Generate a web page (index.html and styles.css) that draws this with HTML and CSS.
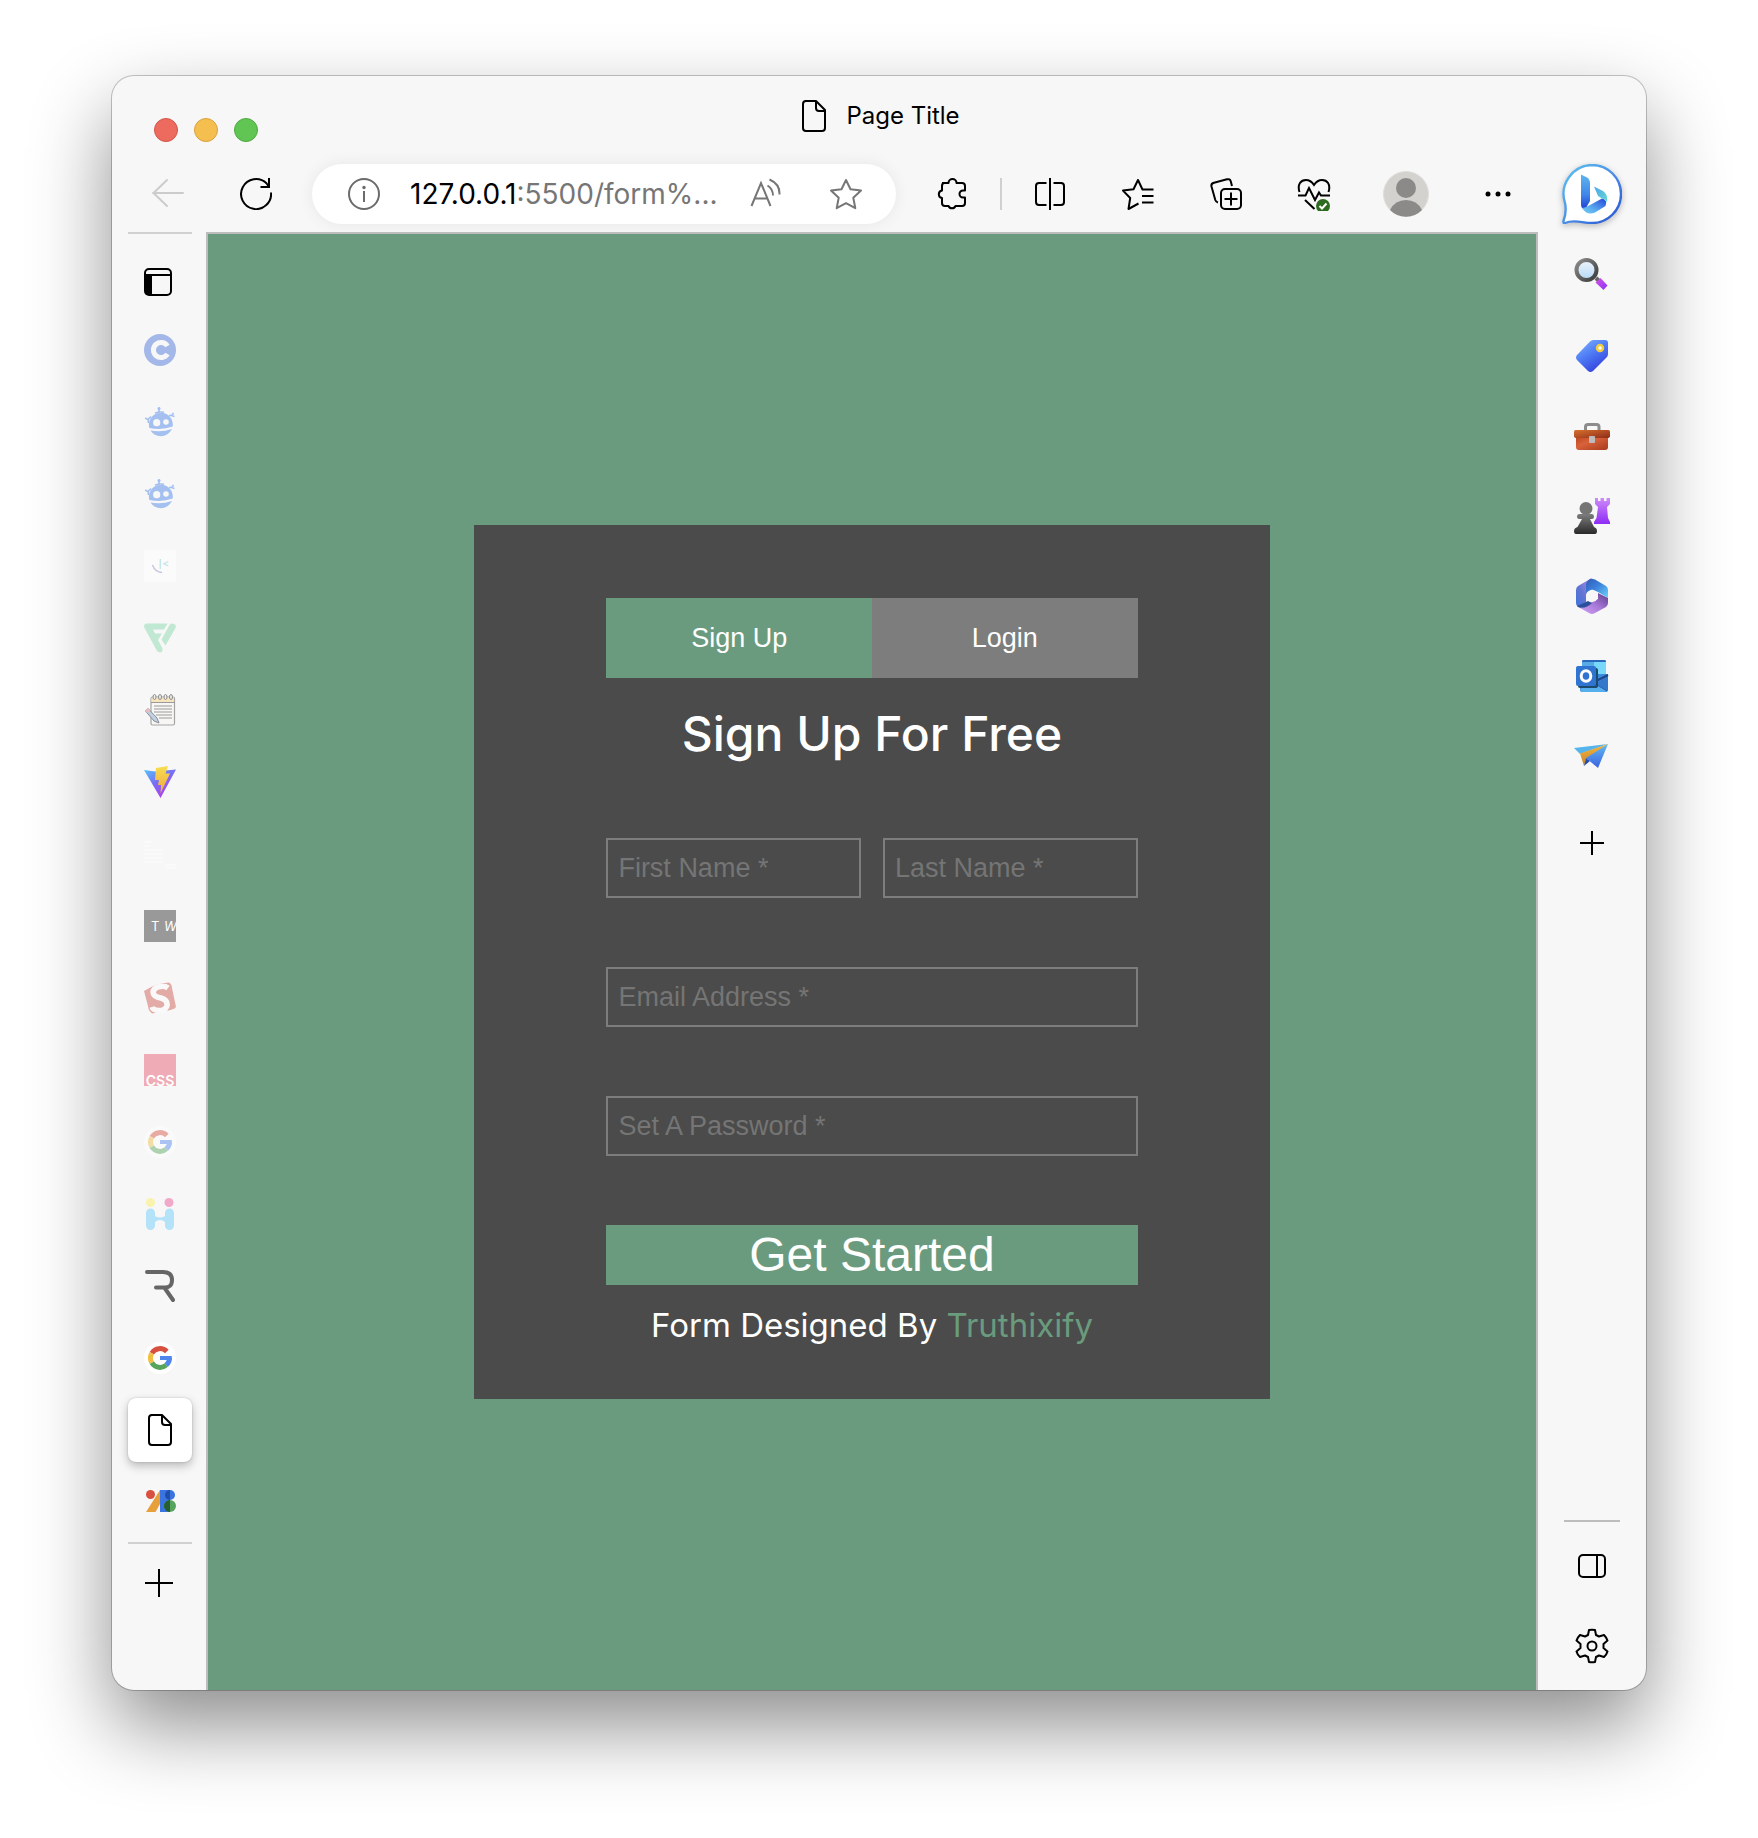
FILE: index.html
```html
<!DOCTYPE html>
<html lang="en">
<head>
<meta charset="utf-8">
<title>Page Title</title>
<link rel="stylesheet" href="styles.css">
</head>
<body>
<svg class="defs" aria-hidden="true">
  <defs>
    <linearGradient id="bingRing" x1="0" y1="0" x2="1" y2="1"><stop offset="0" stop-color="#5fc4ee"/><stop offset=".5" stop-color="#4a8fe8"/><stop offset="1" stop-color="#2450cf"/></linearGradient>
    <linearGradient id="bingStem" x1="0" y1="0" x2="0" y2="1"><stop offset="0" stop-color="#5fb4ee"/><stop offset=".6" stop-color="#3f86ea"/><stop offset="1" stop-color="#2142d4"/></linearGradient>
    <linearGradient id="bingFoot" x1="0" y1="1" x2="1" y2="0"><stop offset="0" stop-color="#6fd0f4"/><stop offset=".4" stop-color="#5aa8ee"/><stop offset="1" stop-color="#2445d8"/></linearGradient>
    <linearGradient id="bingHead" x1="0" y1="0" x2="1" y2="1"><stop offset="0" stop-color="#4ea3ec"/><stop offset="1" stop-color="#64dcd0"/></linearGradient>
    <linearGradient id="vite" x1="0" y1="0" x2=".7" y2="1"><stop offset="0" stop-color="#52c4fb"/><stop offset=".5" stop-color="#7a6cf4"/><stop offset="1" stop-color="#b43af0"/></linearGradient>
    <linearGradient id="bolt" x1="0" y1="0" x2="0" y2="1"><stop offset="0" stop-color="#f8de52"/><stop offset="1" stop-color="#f0a63c"/></linearGradient>
    <linearGradient id="lens" x1="0" y1="0" x2="0" y2="1"><stop offset="0" stop-color="#eef5fc"/><stop offset="1" stop-color="#b4d8f6"/></linearGradient>
    <linearGradient id="rim" x1="0" y1="0" x2="1" y2="1"><stop offset="0" stop-color="#8b8b8b"/><stop offset="1" stop-color="#3c3c3c"/></linearGradient>
    <linearGradient id="grip" x1="0" y1="0" x2="1" y2="1"><stop offset="0" stop-color="#d852e4"/><stop offset="1" stop-color="#8a34f4"/></linearGradient>
    <linearGradient id="tag" x1="0" y1="0" x2=".6" y2="1"><stop offset="0" stop-color="#85b8fa"/><stop offset=".5" stop-color="#4e7df6"/><stop offset="1" stop-color="#3542dc"/></linearGradient>
    <linearGradient id="lid" x1="0" y1="0" x2="1" y2="1"><stop offset="0" stop-color="#d8702e"/><stop offset="1" stop-color="#8e2c18"/></linearGradient>
    <linearGradient id="chest" x1="0" y1="0" x2="1" y2="1"><stop offset="0" stop-color="#b8441e"/><stop offset=".4" stop-color="#d8623a"/><stop offset="1" stop-color="#a83a1c"/></linearGradient>
    <linearGradient id="pawn" x1="0" y1="0" x2="0" y2="1"><stop offset="0" stop-color="#7d7d7d"/><stop offset="1" stop-color="#2a2a2a"/></linearGradient>
    <linearGradient id="rook" x1="0" y1="0" x2="0" y2="1"><stop offset="0" stop-color="#cf8bfa"/><stop offset="1" stop-color="#8e2cf4"/></linearGradient>
    <linearGradient id="mLeft" x1="1" y1="0" x2="0" y2="1"><stop offset="0" stop-color="#b48ae4"/><stop offset=".55" stop-color="#6274d4"/><stop offset="1" stop-color="#3f74d8"/></linearGradient>
    <linearGradient id="mTop" x1="0" y1="0" x2="1" y2="1"><stop offset="0" stop-color="#2f5cb4"/><stop offset=".45" stop-color="#3c80dc"/><stop offset="1" stop-color="#6cd4f8"/></linearGradient>
    <linearGradient id="mLow" x1="0" y1="1" x2="1" y2="0"><stop offset="0" stop-color="#d4a4f6"/><stop offset=".5" stop-color="#a878d8"/><stop offset="1" stop-color="#5c3c8c"/></linearGradient>
    <linearGradient id="wing" x1="0" y1="0" x2="0" y2="1"><stop offset="0" stop-color="#64baf2"/><stop offset="1" stop-color="#3a62e0"/></linearGradient>
    <linearGradient id="fold" x1="0" y1="0" x2="0" y2="1"><stop offset="0" stop-color="#f4b83c"/><stop offset="1" stop-color="#c8802c"/></linearGradient>

    <symbol id="i-file" viewBox="0 0 32 32"><path d="M7 1H18L27 10V28Q27 31 24 31H8Q5 31 5 28V4Q5 1 8 1ZM18 1V8Q18 11 21 11H27" fill="none" stroke="#000" stroke-width="2" stroke-linejoin="round"/></symbol>
    <symbol id="i-robot" viewBox="0 0 32 32">
      <path d="M5.300 22A12 12 0 1 1 28.700 20.500Q18 24.500 5.300 22Z"/>
      <path d="M6.500 24.500Q18 26.500 28 23Q24 30.200 17 30.200T6.500 24.500Z"/>
      <circle cx="12.700" cy="16.700" r="3.600" fill="#f7f7f7"/><circle cx="22" cy="16" r="2.800" fill="#f7f7f7"/>
      <path d="M11 7.300Q15 5.300 20 6.300M15 6V1.500M4.500 17 4 13.500 1.200 12M4 13.500 7 10.500M25 9.500 27.500 9.500 30.500 10.500M27.500 10 29.500 7" fill="none" stroke="#a4c0f0" stroke-width="1.600"/><circle cx="15" cy="2.500" r="1.500"/>
    </symbol>
    <symbol id="i-google" viewBox="0 0 32 32">
      <circle cx="16" cy="16" r="16" fill="#fff"/>
      <g fill="none" stroke-width="5">
        <path d="M22.800 9.500A9.500 9.500 0 0 0 7.800 11.200" stroke="#d8503f"/>
        <path d="M7.800 11.200A9.500 9.500 0 0 0 7.800 20.800" stroke="#f2bf42"/>
        <path d="M7.800 20.800A9.500 9.500 0 0 0 22.300 23" stroke="#57a55c"/>
        <path d="M22.300 23A9.500 9.500 0 0 0 25.500 16" stroke="#5086ec"/>
        <path d="M16 16H27.800" stroke="#5086ec" stroke-width="4"/>
      </g>
    </symbol>
  </defs>
</svg>

<div class="window">
  <header class="titlebar">
    <div class="lights">
      <button class="light light-close" aria-label="Close"></button>
      <button class="light light-min" aria-label="Minimize"></button>
      <button class="light light-max" aria-label="Zoom"></button>
    </div>
    <div class="title"><svg class="i32"><use href="#i-file"/></svg><span>Page Title</span></div>
  </header>

  <nav class="toolbar" aria-label="Browser toolbar">
    <button class="tool" aria-label="Back"><svg class="i32" viewBox="0 0 32 32"><path d="M31 15H1M15 2 1.500 15 15 28" fill="none" stroke="#ccc" stroke-width="2" stroke-linecap="round" stroke-linejoin="round"/></svg></button>
    <button class="tool" aria-label="Reload"><svg class="i32" viewBox="0 0 32 32"><path d="M31 14.500A15 15 0 1 1 26.500 5.300L29 9M29 0V9H20.500" fill="none" stroke="#000" stroke-width="2"/></svg></button>
    <div class="address">
      <button class="tool" aria-label="Site information"><svg class="i32" viewBox="0 0 32 32"><circle cx="16" cy="16" r="15" fill="none" stroke="#6b6b6b" stroke-width="2"/><path d="M16 13V24" stroke="#6b6b6b" stroke-width="2"/><circle cx="16" cy="9.500" r="1.700" fill="#6b6b6b"/></svg></button>
      <button class="url"><span class="host">127.0.0.1</span>:5500/form%...</button>
      <button class="tool tool-small" aria-label="Read aloud"><svg class="i32" viewBox="0 0 32 32"><path d="M1.500 28 11 5 20.500 28M4.500 20.500H17.500M17.500 7.500Q23 11 23 17.500M19.500 1.500Q30 6 29.500 16.500" fill="none" stroke="#767676" stroke-width="2"/></svg></button>
      <button class="tool tool-small" aria-label="Add to favorites"><svg class="i32" viewBox="0 0 32 32"><path d="M16 2 20.500 11.200 31 12.600 23.300 19.800 25.300 30.200 16 25.200 6.700 30.200 8.700 19.800 1 12.600 11.500 11.200Z" fill="none" stroke="#767676" stroke-width="2" stroke-linejoin="round"/></svg></button>
    </div>
    <button class="tool" aria-label="Extensions"><svg class="i32" viewBox="0 0 32 32"><path d="M6 5H12.500A4 4 0 0 1 20.500 5H26Q29 5 29 8V12.500H27A3.500 3.500 0 0 0 27 19.500H29V25Q29 28 26 28H19.500A3.800 3.800 0 0 1 12.500 28H9Q6 28 6 25V20A3.800 3.800 0 0 1 6 12.500V8Q6 5 8.500 5" fill="none" stroke="#000" stroke-width="2" stroke-linejoin="round"/></svg></button>
    <span class="bar"></span>
    <button class="tool" aria-label="Split screen"><svg class="i32" viewBox="0 0 32 32"><path d="M12.500 5H5Q2 5 2 8V24Q2 27 5 27H12.500M19.500 5H27Q30 5 30 8V24Q30 27 27 27H19.500M16 0V32" fill="none" stroke="#000" stroke-width="2"/></svg></button>
    <button class="tool" aria-label="Favorites"><svg class="i32" viewBox="0 0 32 32"><path d="M31.500 11.500H20.500L16 2 11.500 11.200 1 12.600 8.200 20 6.500 31 16.500 25.500M20 18H31.500M20 24.500H31.500" fill="none" stroke="#000" stroke-width="2" stroke-linejoin="round"/></svg></button>
    <button class="tool" aria-label="Collections"><svg class="i32" viewBox="0 0 32 32"><g fill="none" stroke="#000" stroke-width="2"><path d="M22 8 20.800 3.500Q20 .5 17 1.300L4 4.800Q.8 5.600 1.500 8.500L5.300 22Q6 24 8 24.500"/><rect x="11" y="11" width="20" height="20" rx="4"/><path d="M21 14.500V27.500M14.500 21H27.500"/></g></svg></button>
    <button class="tool" aria-label="Browser essentials"><svg class="i34" viewBox="0 0 34 34"><path d="M2.500 15C0 7 4 3 9 3 13 3 15 5 17 8 19 5 21 3 25 3 30 3 34 7 31.500 15M1 18.500H8.500L12 11 18 23 22 15.500 24 18.500H33M8 23 17.500 32" fill="none" stroke="#000" stroke-width="2"/><circle cx="26" cy="29" r="7" fill="#2c6b20"/><path d="M22.500 29 25 31.500 29.500 26.500" fill="none" stroke="#fff" stroke-width="2"/></svg></button>
    <button class="tool tool-wide" aria-label="Profile"><svg class="i46" viewBox="0 0 46 46"><circle cx="23" cy="23" r="22.500" fill="#d3d2ce" stroke="#dfdedb"/><circle cx="23" cy="17" r="10" fill="#8b8a88"/><path d="M7 39Q12 29 23 29T39 39A22.500 22.500 0 0 1 7 39Z" fill="#8b8a88"/></svg></button>
    <button class="tool" aria-label="Settings and more"><svg class="i32" viewBox="0 0 32 32"><circle cx="6" cy="16" r="2.500"/><circle cx="16" cy="16" r="2.500"/><circle cx="26" cy="16" r="2.500"/></svg></button>
    <button class="tool tool-bing" aria-label="Bing Chat"><svg class="i60" viewBox="0 0 60 60"><path d="M30 1A29 29 0 1 1 30 59C20 59 12 55 3 59Q1 59.500 1.500 57C4 50 4.500 46 3 39A29 29 0 0 1 30 1Z" fill="#fff" stroke="url(#bingRing)" stroke-width="2.400"/><path d="M19 10.500 25 13.500Q28 15.500 28 19V37L24 44Q19 46 19 40Z" fill="url(#bingStem)"/><path d="M20 44Q24 44 28 41L40 34.500Q46 36 43.500 42L33 48.500Q25 52 20 44Z" fill="url(#bingFoot)"/><path d="M32 22.500 41 27Q46 30 45 39 44 35 40 34.500L36 32Z" fill="url(#bingHead)"/></svg></button>
  </nav>

  <div class="workspace">
    <aside class="rail rail-tabs" aria-label="Vertical tabs">
      <hr class="rule">
      <button class="tabmenu" aria-label="Tab actions"><svg class="i28" viewBox="0 0 28 28"><rect x="1" y="1" width="26" height="26" rx="4" fill="none" stroke="#000" stroke-width="2"/><path d="M1 7H27" stroke="#000" stroke-width="2"/><path d="M1 7H8V27H4Q1 27 1 24Z"/></svg></button>
      <button class="tab" aria-label="Coursera tab"><svg class="i32" viewBox="0 0 32 32"><circle cx="16" cy="16" r="16" fill="#a3b8e8"/><path d="M23.500 12A7.600 7.600 0 1 0 23.500 20" fill="none" stroke="#f7f7f7" stroke-width="5"/></svg></button>
      <button class="tab" aria-label="Robot tab 1"><svg class="i32 robot"><use href="#i-robot"/></svg></button>
      <button class="tab" aria-label="Robot tab 2"><svg class="i32 robot"><use href="#i-robot"/></svg></button>
      <button class="tab" aria-label="Blank tab"><svg class="i32" viewBox="0 0 32 32"><path d="M0 0H32V32H0Z" fill="#fbfbfb"/><g fill="none" stroke-width="1.400"><path d="M8.500 15Q11 22 18 22.500" stroke="#c4c4e2"/><path d="M16.300 9V19M24.300 11.500 20 13.700 24.300 16" stroke="#c4e6e6"/></g></svg></button>
      <button class="tab" aria-label="Frontend tab"><svg class="i32" viewBox="0 0 32 32"><path d="M3 1.500H23.500L20 7.500H9L11 11.500H18L14 18 18.500 26.500Q19 30 16 30.500 13.500 30 12.500 28L.5 6Q-1 2 3 1.500ZM28 1.500Q33 2 31.500 6L21.500 23.500 17.500 17.500 25.500 3Q26.500 1.500 28 1.500Z" fill="#c0e8d2"/></svg></button>
      <button class="tab" aria-label="Notes tab"><svg class="i32" viewBox="0 0 32 32"><rect x="7" y="3" width="23.500" height="28" rx="1.500" fill="#f7f6f4" stroke="#a5a5a5" stroke-width="1.200"/><path d="M7.500 3.500H30V8H7.500Z" fill="#f6e4bd"/><path d="M7 8.500H30.500M10 12H28M10 15H28M10 18H28M12 21H28M15 24H28" stroke="#9a9a9a" stroke-width="1.200"/><g fill="#eee" stroke="#8c8c8c"><ellipse cx="10.500" cy="3" rx="1.500" ry="2.500"/><ellipse cx="16" cy="3" rx="1.500" ry="2.500"/><ellipse cx="21.500" cy="3" rx="1.500" ry="2.500"/><ellipse cx="27" cy="3" rx="1.500" ry="2.500"/></g><path d="M1.500 17 4 14.500 13 24 15 29 10 27Z" fill="#bfd0e2" stroke="#8d8d95"/><path d="M1.500 17 4 14.500 6 16.500 3.500 19Z" fill="#eebcc0"/></svg></button>
      <button class="tab" aria-label="Vite tab"><svg class="i32" viewBox="0 0 32 32"><path d="M0 4 11 5.500 21 4.500 32 3.500 16.500 32Z" fill="url(#vite)"/><path d="M12 2 24 0 21.500 7.500H26L16.500 27.500 17 19H14L15 14H11Z" fill="url(#bolt)"/></svg></button>
      <button class="tab" aria-label="Page tab"><svg class="i32" viewBox="0 0 32 32"><path d="M0 4H8M0 8H6M0 12H18M0 16H19M0 20H19M0 24H18M20 27H32M22 30H32" stroke="#fafafa" stroke-width="2"/></svg></button>
      <button class="tab" aria-label="TW tab"><svg class="i32 glyph" viewBox="0 0 32 32"><path d="M0 0H32V32H0Z" fill="#999"/><text x="7" y="21" font-size="13">T</text><text x="20" y="21" font-size="13" font-style="italic">W</text></svg></button>
      <button class="tab" aria-label="Stack tab"><svg class="i32" viewBox="0 0 32 32"><path d="M0 9Q12 1 25 .5 28 2 28 6L32 25Q30 28 20 29L8 31.500Q4 28 4 24Z" fill="#e3aba6"/><path d="M24 6Q20 3 14 5 8 7 9.500 12 11 15 17 16 24 18 23 24 21 29 14 28.500 9 28 8 25" fill="none" stroke="#f9f9f9" stroke-width="5.500"/></svg></button>
      <button class="tab" aria-label="CSS tab"><svg class="i32 glyph" viewBox="0 0 32 32"><path d="M0 0H32V32H0Z" fill="#f0acb6"/><text x="16" y="32" font-size="14" font-weight="600" text-anchor="middle">CSS</text></svg></button>
      <button class="tab" aria-label="Google tab"><svg class="i32 faded"><use href="#i-google"/></svg></button>
      <button class="tab" aria-label="Hi tab"><svg class="i32" viewBox="0 0 32 32"><circle cx="6.500" cy="4.500" r="4.500" fill="#faf3ae"/><circle cx="25" cy="4.500" r="4.500" fill="#f2a8c8"/><path d="M2 15A4.500 4.500 0 0 1 11 15V18Q16 21 21 18V15A4.500 4.500 0 0 1 30 15V27.500A4.500 4.500 0 0 1 21 27.500V24Q16 20 11 24V27.500A4.500 4.500 0 0 1 2 27.500Z" fill="#b4e2f8"/></svg></button>
      <button class="tab" aria-label="R tab"><svg class="i32" viewBox="0 0 32 32"><path d="M3 2H19Q28 2 28 10T20 17.500H12M21 18.500 29 30" fill="none" stroke="#666" stroke-width="4" stroke-linecap="round"/></svg></button>
      <button class="tab" aria-label="Google search tab"><svg class="i32"><use href="#i-google"/></svg></button>
      <button class="tab tab-active" aria-label="Page Title tab"><span class="tab-card"><svg class="i32"><use href="#i-file"/></svg></span></button>
      <button class="tab" aria-label="Shapes tab"><svg class="i32" viewBox="0 1 32 32"><circle cx="6.500" cy="9.500" r="4.500" fill="#d8503f"/><path d="M16 5V19L11.500 27H2Z" fill="#e8a03a"/><path d="M16 5H26V27H16Z" fill="#3a74e0"/><circle cx="26" cy="10" r="5" fill="#3a74e0"/><path d="M26 5A5 5 0 0 0 26 15Z" fill="#1f4fa8"/><circle cx="26" cy="21" r="6" fill="#57a55c"/><path d="M26 15A6 6 0 0 0 26 27Z" fill="#285e30"/></svg></button>
      <hr class="rule rule-low">
      <button class="newtab" aria-label="New tab"><svg class="i28" viewBox="0 0 28 28"><path d="M14 0V28M0 14H28" stroke="#000" stroke-width="2"/></svg></button>
    </aside>

    <main class="page">
      <form class="card">
        <div class="switch">
          <button type="button" class="switch-btn switch-on">Sign Up</button>
          <button type="button" class="switch-btn">Login</button>
        </div>
        <h1 class="heading">Sign Up For Free</h1>
        <div class="fields">
          <div class="names">
            <input class="field" type="text" placeholder="First Name *" aria-label="First Name">
            <input class="field" type="text" placeholder="Last Name *" aria-label="Last Name">
          </div>
          <input class="field" type="email" placeholder="Email Address *" aria-label="Email Address">
          <input class="field" type="password" placeholder="Set A Password *" aria-label="Set A Password">
          <button type="button" class="submit">Get Started</button>
        </div>
        <p class="credit">Form Designed By <a href="#">Truthixify</a></p>
      </form>
    </main>

    <aside class="rail rail-apps" aria-label="Sidebar">
      <button class="app" aria-label="Search"><svg class="i36" viewBox="0 2 36 36"><path d="M22 22 26 26" stroke="#666" stroke-width="4"/><path d="M21.500 26.500 26.500 22 33.500 29.500 29.500 34Z" fill="url(#grip)"/><circle cx="12.500" cy="14" r="10" fill="url(#lens)" stroke="url(#rim)" stroke-width="4"/></svg></button>
      <button class="app" aria-label="Shopping"><svg class="i36" viewBox="0 0 36 36"><path d="M19 2H31Q34 2 34 5V16Q34 18 32.500 19.500L19 33Q16.500 35 14 33L3 22Q1 19.500 3 17L16 3.500Q17.500 2 19 2Z" fill="url(#tag)"/><circle cx="26" cy="10" r="3" fill="#fff" stroke="#f4cc3c" stroke-width="2.500"/></svg></button>
      <button class="app" aria-label="Tools"><svg class="i36" viewBox="0 0 36 36"><path d="M11.500 13V9Q11.500 6.500 14 6.500H22.500Q25 6.500 25 9V13" fill="none" stroke="#8c8c8c" stroke-width="3"/><path d="M2 18H34V29Q34 32 31 32H5Q2 32 2 29Z" fill="url(#chest)"/><path d="M1.500 12H34.500Q36 12 36 14V18Q36 20 33 20H3Q0 20 0 18V14Q0 12 1.500 12Z" fill="url(#lid)"/><rect x="15" y="18" width="6" height="7" rx="1" fill="#bcbcbc"/></svg></button>
      <button class="app" aria-label="Games"><svg class="i36" viewBox="0 0 36 36"><path d="M21 0H24V3H26.500V0H30V3H32.500V0H36V6L33 9 34 20 36 24V26H20V24L22.500 20 24 9 21 6Z" fill="url(#rook)"/><circle cx="12" cy="10.500" r="6.500" fill="#757575"/><path d="M5 16H18Q20 16 20 18.500T17.500 21H16L20 29Q23 30 23 33T21 36H2Q0 36 0 33T3.500 29L8 21H5.500Q3 21 3 18.500T5 16Z" fill="url(#pawn)"/></svg></button>
      <button class="app" aria-label="Microsoft 365"><svg class="i36" viewBox="0 0 36 36"><path d="M17 .5 12 18V24L4 29Q2 27.500 2 25V12Q2 9.500 4 8Z" fill="url(#mLeft)"/><path d="M17 .5 21 1.500 32 8Q34 9.500 34 12V20L24 14 18 11.500 12 15V6Q13 2 17 .5Z" fill="url(#mTop)"/><path d="M34 20V25Q34 27.500 32 29L20.500 35.300Q18 36.500 15.500 35.300L5 29.500Q12 30 16 25L24 21V15Z" fill="url(#mLow)"/><path d="M3 28 14 23 18 25Q12 31 5 29.500Z" fill="#2c4f9c"/><circle cx="18" cy="18" r="6" fill="#f7f7f7"/></svg></button>
      <button class="app" aria-label="Outlook"><svg class="i36" viewBox="0 0 36 36"><path d="M8 3.500Q8 2 9.500 2H30.500Q32 2 32 3.500V20H8Z" fill="#57aae6"/><path d="M20 4H32V16H20Z" fill="#78d8fa"/><path d="M8 3.500Q8 2 9.500 2H30.500Q32 2 32 4H8Z" fill="#2a68bc"/><path d="M6 16H34V32Q34 34 32 34H8Q6 34 6 32Z" fill="#3c8cdc"/><path d="M22 26 34 17V32L33 33Z" fill="#3478cc"/><path d="M22 27 33 33.500Q30 34 8 34L6 31 21 25Z" fill="#56b0ee"/><path d="M22 23 34 17" stroke="#1f448c" stroke-width="2"/><path d="M22 26 33 33" stroke="#2a64ac"/><rect x="4" y="10" width="20" height="20" rx="2" fill="#1c4a6c"/><rect x="2" y="8" width="20" height="20" rx="2" fill="#2e74d0"/><ellipse cx="12" cy="18" rx="4.800" ry="5.300" fill="none" stroke="#fff" stroke-width="3"/></svg></button>
      <button class="app" aria-label="Drop"><svg class="i36" viewBox="0 0 36 36"><path d="M0 10 34 6 6 16Z" fill="#56b4ec"/><path d="M34 6 6 15.500 10 28 12 21Z" fill="url(#fold)"/><path d="M10 28 12 20 16 23Z" fill="#1f50b0"/><path d="M34 6 12 20 24 30Z" fill="url(#wing)"/></svg></button>
      <button class="app app-add" aria-label="Customize sidebar"><svg class="i24" viewBox="0 0 24 24"><path d="M12 0V24M0 12H24" stroke="#000" stroke-width="2"/></svg></button>
      <hr class="rule rule-apps">
      <button class="app" aria-label="Hide sidebar"><svg class="i28" viewBox="0 0 28 28"><rect x="1" y="3" width="26" height="22" rx="4" fill="none" stroke="#000" stroke-width="2"/><path d="M19 3V25" stroke="#000" stroke-width="2"/></svg></button>
      <button class="app" aria-label="Settings"><svg class="i36" viewBox="0 0 36 36"><g fill="none" stroke="#000" stroke-width="2" stroke-linejoin="round"><path d="M15 2Q18 1.300 21 2L22 7 25 8.500 30 7Q32.500 9.500 33.500 12.500L29.500 16V20L33.500 23.500Q32.500 27 30 29L25 27.500 22 29 21 34Q18 34.700 15 34L14 29 11 27.500 6 29Q3.500 27 2.500 23.500L6.500 20V16L2.500 12.500Q3.500 9.500 6 7L11 8.500 14 7Z"/><circle cx="18" cy="18" r="4.500"/></g></svg></button>
    </aside>
  </div>
</div>
</body>
</html>
```
FILE: styles.css
```css
* { box-sizing: border-box; }

body {
  margin: 0;
  min-height: 100vh;
  padding: 76px 112px 148px;
  display: flex;
  background: #fff;
  font-family: Inter, "Liberation Sans", sans-serif;
}

button {
  border: 0;
  padding: 0;
  background: none;
  font: inherit;
  color: inherit;
}

svg { display: block; flex: none; }
hr { margin: 0; border: 0; }

.defs { position: absolute; width: 0; height: 0; }

.i24 { width: 24px; height: 24px; }
.i28 { width: 28px; height: 28px; }
.i32 { width: 32px; height: 32px; }
.i34 { width: 34px; height: 34px; }
.i36 { width: 36px; height: 36px; }
.i46 { width: 46px; height: 46px; }
.i60 { width: 60px; height: 60px; }

/* Window frame */
.window {
  flex: 1;
  min-width: 0;
  display: flex;
  flex-direction: column;
  overflow: hidden;
  border-radius: 22px;
  background: #f7f7f7;
  box-shadow: 0 0 0 1px rgba(0, 0, 0, .22), 0 36px 80px rgba(0, 0, 0, .45);
}

.titlebar {
  height: 88px;
  display: grid;
  grid-template-columns: 1fr auto 1fr;
  align-items: start;
}

.lights {
  display: flex;
  gap: 16px;
  padding: 42px 0 0 42px;
}

.light {
  width: 24px;
  height: 24px;
  border-radius: 50%;
  border: 1px solid;
}

.light-close { background: #ec6a5e; border-color: #d35549; }
.light-min { background: #f4bf4f; border-color: #d9a23c; }
.light-max { background: #61c554; border-color: #4fa940; }

.title {
  display: flex;
  align-items: center;
  gap: 16px;
  padding-top: 24px;
  font-size: 24px;
  line-height: 32px;
}

/* Toolbar */
.toolbar {
  display: flex;
  align-items: center;
  padding: 0 4px 8px 12px;
}

.tool {
  width: 88px;
  height: 60px;
  flex: none;
  display: grid;
  place-items: center;
}

.tool-small { width: 80px; }
.tool-wide { width: 96px; }
.tool-bing { width: 100px; filter: drop-shadow(0 2px 3px rgba(0, 0, 0, .25)); }

.address {
  flex: 1;
  min-width: 0;
  height: 60px;
  margin: 0 12px;
  padding: 0 10px 0 8px;
  display: flex;
  align-items: center;
  border-radius: 30px;
  background: #fff;
  box-shadow: 0 0 16px rgba(0, 0, 0, .07);
}

.url {
  flex: 1;
  min-width: 0;
  padding-left: 2px;
  overflow: hidden;
  white-space: nowrap;
  text-align: left;
  font-size: 28px;
  line-height: 36px;
  color: #767676;
}

.host { color: #000; }

.bar {
  width: 2px;
  height: 32px;
  margin: 0 4px;
  background: #d0d0d0;
}

/* Workspace */
.workspace {
  flex: 1;
  display: grid;
  grid-template-columns: 94px minmax(0, 1fr) 108px;
}

.rail { display: flex; flex-direction: column; }
.rail-tabs { padding: 0 14px 0 16px; }

.rule { height: 2px; background: #d0d0d0; flex: none; }
.rail-tabs .rule { width: 64px; margin-bottom: 16px; }
.rail-tabs .rule-low { margin: 4px 0 0; }

.tabmenu {
  width: 60px;
  height: 64px;
  display: grid;
  place-items: center;
}

.tab {
  width: 64px;
  height: 72px;
  display: grid;
  place-items: center;
}

.tab-card {
  width: 64px;
  height: 64px;
  display: grid;
  place-items: center;
  border-radius: 8px;
  background: #fff;
  box-shadow: 0 0 2px rgba(0, 0, 0, .2), 0 4px 10px rgba(0, 0, 0, .25);
}

.newtab {
  width: 62px;
  height: 78px;
  display: grid;
  place-items: center;
}

.robot { fill: #a4c0f0; }
.faded { opacity: .45; }
.glyph { fill: #fff; overflow: hidden; }

.rail-apps { align-items: center; padding: 4px 0; }

.app {
  width: 80px;
  height: 80px;
  display: grid;
  place-items: center;
}

.app-add { height: 94px; }

.rule-apps {
  width: 56px;
  margin: auto 0 4px;
  background: #bdbdbd;
}

/* Web page */
.page {
  display: grid;
  place-items: center;
  border: 2px solid #bdbdbd;
  border-bottom: 0;
  background: #6a9b7e;
}

.card {
  width: 60%;
  padding: 73px 10% 50px;
  background: #4a4b4a;
  font-size: 27px;
}

.switch {
  display: grid;
  grid-template-columns: 1fr 1fr;
}

.switch-btn {
  height: 80px;
  background: #7c7d7c;
  color: #fff;
  font-family: "Liberation Sans", Arial, sans-serif;
}

.switch-on { background: #6a9b7e; }

.heading {
  margin: 20px 0 68px;
  font-size: 48px;
  font-weight: 500;
  line-height: 72px;
  text-align: center;
  white-space: nowrap;
  color: #fff;
}

.fields { display: grid; gap: 69px; }

.names {
  display: grid;
  grid-template-columns: 1fr 1fr;
  gap: 22px;
}

.field {
  width: 100%;
  min-width: 0;
  height: 60px;
  padding: 0 10px;
  border: 2px solid #7c7d7c;
  border-radius: 0;
  background: transparent;
  color: #fff;
  font: 27px "Liberation Sans", Arial, sans-serif;
}

.field::placeholder { color: #757575; opacity: 1; }

.submit {
  height: 60px;
  background: #6a9b7e;
  color: #fff;
  font: 48px/60px "Liberation Sans", Arial, sans-serif;
}

.credit {
  margin: 16px 0 0;
  font-size: 33px;
  line-height: 48px;
  text-align: center;
  white-space: nowrap;
  color: #fff;
}

.credit a { color: #6a9b7e; text-decoration: none; }
```
